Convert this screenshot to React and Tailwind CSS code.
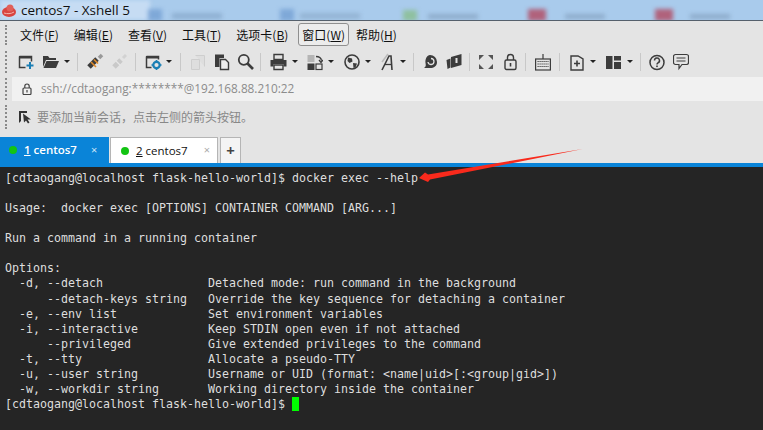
const dk = '#3c3c3c';

function Caret({ className = '' }) {
  return <span className={`block w-0 h-0 border-x-[3px] border-x-transparent border-t-[3px] border-t-[#222] ${className}`} />;
}

function Sep({ className = '' }) {
  return <span className={`block w-px h-[18px] bg-[#c8c8c8] ${className}`} />;
}

function Ico({ w = 16, className = '', children }) {
  return (
    <svg width={w} height="18" viewBox={`0 0 ${w} 18`} className={`shrink-0 ${className}`}>
      {children}
    </svg>
  );
}

function Grip({ className = '' }) {
  return <span className={`block w-[2px] border-l-2 border-dotted border-[#8a8a8a] ${className}`} />;
}

const terminalLines = [
  '[cdtaogang@localhost flask-hello-world]$ docker exec --help',
  '',
  'Usage:  docker exec [OPTIONS] CONTAINER COMMAND [ARG...]',
  '',
  'Run a command in a running container',
  '',
  'Options:',
  '  -d, --detach               Detached mode: run command in the background',
  '      --detach-keys string   Override the key sequence for detaching a container',
  '  -e, --env list             Set environment variables',
  '  -i, --interactive          Keep STDIN open even if not attached',
  '      --privileged           Give extended privileges to the command',
  '  -t, --tty                  Allocate a pseudo-TTY',
  '  -u, --user string          Username or UID (format: <name|uid>[:<group|gid>])',
  '  -w, --workdir string       Working directory inside the container',
];

const menus = [
  ['文件(', 'F', ')'],
  ['编辑(', 'E', ')'],
  ['查看(', 'V', ')'],
  ['工具(', 'T', ')'],
  ['选项卡(', 'B', ')'],
  ['窗口(', 'W', ')'],
  ['帮助(', 'H', ')'],
];

function Toolbar() {
  return (
    <div className="h-[27px] flex items-center pl-[5px]">
      <Grip className="h-[22px] mr-[11px]" />
      {/* new session */}
      <Ico w={16}>
        <path d="M1.5 3.5h12v5M1.5 3.5v11h6" fill="none" stroke={dk} strokeWidth="1.5" />
        <rect x="1" y="3" width="13" height="2.5" fill={dk} />
        <path d="M12 9v7M8.5 12.5h7" stroke="#1a7fb5" strokeWidth="2" />
      </Ico>
      {/* open */}
      <Ico w={17} className="ml-[8px]">
        <path d="M1 3h5l1.5 2H14v2H4L1 14z" fill={dk} />
        <path d="M4.5 8H17l-3 7H1.5z" fill={dk} />
      </Ico>
      <Caret className="ml-[5px]" />
      <Sep className="ml-[7px]" />
      {/* connect */}
      <Ico w={18} className="ml-[8px]">
        <path d="M11 6l-8 8" stroke={dk} strokeWidth="5" />
        <path d="M5 9l5 5M8 6.5l4 4" stroke="#e08a2a" strokeWidth="1.6" />
        <path d="M13 5l3-3" stroke="#999" strokeWidth="3.5" />
      </Ico>
      {/* disconnect */}
      <Ico w={16} className="ml-[7px]">
        <path d="M10 7l-7 7" stroke="#c9c9c9" strokeWidth="5" />
        <path d="M12 5l3-3" stroke="#d2d2d2" strokeWidth="3" />
        <path d="M5 8l5 5" stroke="#e6e6e6" strokeWidth="1.2" />
      </Ico>
      <Sep className="ml-[8px]" />
      {/* properties */}
      <Ico w={17} className="ml-[9px]">
        <path d="M1.5 3.5h12v3M1.5 3.5v11h5" fill="none" stroke={dk} strokeWidth="1.5" />
        <rect x="1" y="3" width="13" height="2.5" fill={dk} />
        <circle cx="11.5" cy="12" r="3.2" fill="none" stroke="#1a7fb5" strokeWidth="2.2" />
        <path d="M11.5 7v2M11.5 15v2M6.5 12h2M14.5 12h2" stroke="#1a7fb5" strokeWidth="1.6" />
      </Ico>
      <Caret className="ml-[4px]" />
      <Sep className="ml-[8px]" />
      {/* copy */}
      <Ico w={16} className="ml-[9px]">
        <path d="M5.5 2.5h9v11M1.5 6.5h8v10h-8z" fill="#dedede" stroke="#cecece" />
      </Ico>
      {/* paste */}
      <Ico w={16} className="ml-[8px]">
        <path d="M1 1.5h9V5H5.5v9H1z" fill={dk} />
        <path d="M6.5 6.5h5l3 3v7h-8z" fill="#eee" stroke={dk} strokeWidth="1.4" />
      </Ico>
      {/* find */}
      <Ico w={17} className="ml-[7px]">
        <circle cx="6.8" cy="6.8" r="5" fill="#e8e8e8" stroke={dk} strokeWidth="1.8" />
        <path d="M10.5 10.5l5.5 5.5" stroke={dk} strokeWidth="2.6" />
      </Ico>
      <Sep className="ml-[6px]" />
      {/* print */}
      <Ico w={17} className="ml-[9px]">
        <path d="M4 1.5h9v5H4zM4 12h9v4.5H4z" fill="none" stroke={dk} strokeWidth="1.4" />
        <path d="M0.5 7H16.5v6.5h-3V11h-10v2.5h-3z" fill={dk} />
      </Ico>
      <Caret className="ml-[5px]" />
      {/* transfer */}
      <Ico w={16} className="ml-[9px]">
        <rect x="0.5" y="2" width="7" height="7" fill="#b5b5b5" />
        <rect x="0.5" y="10.5" width="7" height="6.5" fill={dk} />
        <rect x="9" y="11" width="6" height="5.5" fill="none" stroke={dk} strokeWidth="1.2" />
        <path d="M9 3.5c3 0 5 1 5.500 4M12 7l2 2.500L16 7" fill="none" stroke={dk} strokeWidth="1.3" />
      </Ico>
      <Caret className="ml-[5px]" />
      {/* globe */}
      <Ico w={16} className="ml-[10px]">
        <circle cx="8" cy="9" r="7" fill="none" stroke={dk} strokeWidth="1.6" />
        <path d="M4 4.500l4 1 .5 3-3 1.500-2-2zM9 10l4 .5-1.500 4-2 .5z" fill={dk} />
      </Ico>
      <Caret className="ml-[5px]" />
      {/* font */}
      <Ico w={14} className="ml-[10px]">
        <path d="M1 17L8 3h2l1 14" fill="none" stroke={dk} strokeWidth="1.6" />
        <path d="M4 11.500h6" stroke={dk} strokeWidth="1.300" />
        <path d="M1 9L7 1" stroke="#bbb" strokeWidth="1.500" />
      </Ico>
      <Caret className="ml-[5px]" />
      <Sep className="ml-[7px]" />
      {/* shell */}
      <Ico w={16} className="ml-[8px]">
        <path d="M8 2a7 7 0 0 1 7 7c0 4-3 6-7 6H2c2-1 2-3 1.500-5C3 6 5 2 8 2z" fill={dk} />
        <path d="M9 5.500a3 3 0 1 1-3 3.500" fill="none" stroke="#e4e4e4" strokeWidth="1.300" />
      </Ico>
      {/* script */}
      <Ico w={16} className="ml-[8px]">
        <path d="M0.500 7l4-1.500v9l-3 1.500zM5 4l10.500-3v11L5 15z" fill={dk} />
        <rect x="9.500" y="5" width="2" height="5" fill="#e4e4e4" />
      </Ico>
      <Sep className="ml-[7px]" />
      {/* fullscreen */}
      <Ico w={14} className="ml-[9px]">
        <path d="M0 2h5L0 7zM14 2H9l5 5zM0 16h5l-5-5zM14 16H9l5-5z" fill="#555" />
      </Ico>
      {/* lock */}
      <Ico w={13} className="ml-[11px]">
        <rect x="1" y="7" width="11" height="9.500" rx="1.500" fill="none" stroke={dk} strokeWidth="1.400" />
        <path d="M3.500 7V4.500a3 3 0 0 1 6 0V7" fill="none" stroke={dk} strokeWidth="1.400" />
        <rect x="5.700" y="10" width="1.600" height="3.500" fill={dk} />
      </Ico>
      <Sep className="ml-[8px]" />
      {/* keyboard */}
      <Ico w={16} className="ml-[9px]">
        <path d="M8 1v5" stroke={dk} strokeWidth="1.200" />
        <rect x="0.600" y="6" width="14.800" height="11" fill="none" stroke={dk} strokeWidth="1.200" />
        <path d="M2.500 8.500h11M2.500 11h11M2.500 13.500h11" stroke={dk} strokeWidth="1.200" strokeDasharray="1.200 .8" />
      </Ico>
      <Sep className="ml-[8px]" />
      {/* new tab group */}
      <Ico w={14} className="ml-[10px]">
        <path d="M1 3h7l5 3v11H1z" fill="none" stroke={dk} strokeWidth="1.400" />
        <path d="M7 7.500v6M4 10.500h6" stroke={dk} strokeWidth="1.600" />
      </Ico>
      <Caret className="ml-[6px]" />
      {/* layout */}
      <Ico w={15} className="ml-[10px]">
        <rect x="0" y="3" width="6.500" height="13" fill={dk} />
        <rect x="8" y="3" width="7" height="4.500" fill={dk} />
        <rect x="8" y="9" width="7" height="7" fill={dk} />
      </Ico>
      <Caret className="ml-[6px]" />
      <Sep className="ml-[7px]" />
      {/* help */}
      <Ico w={16} className="ml-[8px]">
        <circle cx="8" cy="9.500" r="7" fill="none" stroke={dk} strokeWidth="1.500" />
        <path d="M5.500 7.500a2.500 2.500 0 1 1 3.500 2.300c-.8.4-1 .8-1 1.700" fill="none" stroke={dk} strokeWidth="1.500" />
        <rect x="7.200" y="12.500" width="1.600" height="1.600" fill={dk} />
      </Ico>
      {/* chat */}
      <Ico w={16} className="ml-[8px]">
        <path d="M2.500 1.500h11a2 2 0 0 1 2 2v6a2 2 0 0 1-2 2H9l-3 4v-4H2.500a2 2 0 0 1-2-2v-6a2 2 0 0 1 2-2z" fill="none" stroke={dk} strokeWidth="1.200" />
        <path d="M3.500 5h9M3.500 8h9" stroke={dk} strokeWidth="1.200" />
      </Ico>
    </div>
  );
}

export default function App() {
  return (
    <div className="relative w-[763px] h-[430px] overflow-hidden bg-[#e4e4e4] font-['Liberation_Sans',sans-serif]">
      {/* Title bar */}
      <div className="relative h-[21px] bg-[#a9cbec] border-b border-[#55606c] overflow-hidden flex items-center">
        {/* blurred windows behind the glass */}
        <div className="absolute inset-0 blur-[2px]">
          <div className="absolute left-0 top-0 h-full w-[150px] bg-[#c6dcf3]" />
          <div className="absolute left-[148px] top-[9px] w-[14px] h-[12px] bg-[#7fa8d8]" />
          <div className="absolute left-[172px] top-[13px] w-[50px] h-[6px] bg-[#8fb0d2]" />
          <div className="absolute left-[280px] top-[9px] w-[14px] h-[12px] bg-[#7fa8d8]" />
          <div className="absolute left-[300px] top-[13px] w-[60px] h-[6px] bg-[#94b4d4]" />
          <div className="absolute left-[403px] top-[10px] w-[14px] h-[11px] bg-[#8fc0a0]" />
          <div className="absolute left-[428px] top-[14px] w-[50px] h-[5px] bg-[#8eaccb]" />
          <div className="absolute left-[528px] top-[9px] w-[18px] h-[12px] bg-[#b0627c]" />
          <div className="absolute left-[565px] top-[14px] w-[40px] h-[5px] bg-[#8eaccb]" />
          <div className="absolute left-[655px] top-[9px] w-[18px] h-[12px] bg-[#b0627c]" />
          <div className="absolute left-[690px] top-[14px] w-[40px] h-[5px] bg-[#8eaccb]" />
        </div>
        <svg width="16" height="15" viewBox="0 0 16 15" className="relative ml-[1px] mr-[4px]">
          <ellipse cx="8" cy="9" rx="7" ry="5" fill="#d9443f" />
          <circle cx="9" cy="5" r="3.500" fill="#e0605a" />
          <path d="M3 10c3 1 7 1 10-1" stroke="#f3b4ae" fill="none" />
        </svg>
        <span className="relative text-[13.5px] text-[#111] font-['Open_Sans',sans-serif]">centos7 - Xshell 5</span>
      </div>

      {/* Menu bar */}
      <div className="h-[27px] flex items-center pl-[5px]">
        <Grip className="h-[20px] mr-[9px]" />
        <div className="flex items-center text-[12px] text-[#111] font-['Noto_Sans_CJK_SC',sans-serif]">
          {menus.map(([a, b, c]) => (
            <span
              key={b}
              className={`px-[3px] h-[23px] leading-[21px] mr-[7px] rounded-[3px] whitespace-nowrap ${b === 'W' ? 'border border-[#8f8f8f] bg-[#ececec] !mr-[3px] -ml-[1px]' : 'border border-transparent'}`}
            >
              {a}<span className="underline">{b}</span>{c}
            </span>
          ))}
        </div>
      </div>

      <Toolbar />

      {/* Address bar */}
      <div className="h-[25px] mt-[1px] flex items-center pl-[5px]">
        <Grip className="h-[22px] mr-[5px]" />
        <div className="flex-1 h-[24px] bg-[#f1f1f1] flex items-center pl-[10px]">
          <svg width="10" height="12" viewBox="0 0 10 12" className="mr-[9px]">
            <rect x="1" y="5" width="8" height="6.500" rx="1" fill="none" stroke="#444" strokeWidth="1.200" />
            <path d="M2.800 5V3.200a2.200 2.200 0 0 1 4.400 0V5" fill="none" stroke="#444" strokeWidth="1.200" />
            <rect x="4.400" y="7" width="1.200" height="2.500" fill="#444" />
          </svg>
          <span className="text-[11.8px] text-[#8c8c8c] font-['Open_Sans',sans-serif]">ssh://cdtaogang:********@192.168.88.210:22</span>
        </div>
      </div>

      {/* Quick bar */}
      <div className="h-[31px] flex items-center pl-[5px]">
        <Grip className="h-[24px] mr-[11px]" />
        <svg width="14" height="14" viewBox="0 0 14 14" className="mr-[5px]">
          <path d="M1 1h8v2H3v8l-2 2z" fill="#333" />
          <path d="M5 3.500l1 9 2-2 2 3 1.500-1-2-3H13z" fill="#333" />
        </svg>
        <span className="text-[12px] text-[#888] font-['Noto_Sans_CJK_SC',sans-serif]">要添加当前会话，点击左侧的箭头按钮。</span>
      </div>

      {/* Tabs */}
      <div className="h-[26px] mt-[5px] flex items-stretch gap-[1px] font-['Open_Sans',sans-serif] text-[11.5px]">
        <div className="w-[109px] bg-[#0a84d8] text-white flex items-center pl-[9px]">
          <span className="w-[8px] h-[8px] rounded-full bg-[#13c413] mr-[7px]" />
          <span className="font-semibold"><span className="underline">1</span> centos7</span>
          <span className="ml-[14px] text-[11px] text-[#cfe6f7]">×</span>
        </div>
        <div className="w-[108px] bg-white border border-[#b5b5b5] border-b-0 text-[#111] flex items-center pl-[10px]">
          <span className="w-[8px] h-[8px] rounded-full bg-[#13c413] mr-[7px]" />
          <span><span className="underline">2</span> centos7</span>
          <span className="ml-[16px] text-[11px] text-[#aaa]">×</span>
        </div>
        <div className="w-[21px] ml-[1px] bg-[#f4f4f4] border border-[#b5b5b5] border-b-0 flex items-center justify-center text-[15px] font-bold leading-none text-[#444]">+</div>
      </div>

      {/* Terminal */}
      <div className="h-[4px] bg-[#0a84d8]" />
      <div className="h-[263px] bg-[#252525] pl-[5px] pt-[4px] font-['DejaVu_Sans_Mono',monospace] text-[11.64px] leading-[15.07px] text-[#dedede] whitespace-pre">
        {terminalLines.map((line, i) => (
          <div key={i} className="h-[15.07px]">{line}</div>
        ))}
        <div className="h-[15.07px] flex items-center">
          <span>{'[cdtaogang@localhost flask-hello-world]$ '}</span>
          <span className="w-[7px] h-[14px] bg-[#00ff00]" />
        </div>
      </div>

      {/* red annotation arrow */}
      <svg width="763" height="430" className="absolute left-0 top-0 pointer-events-none">
        <polygon points="582.700,149 428,174.500 425,172.500 419,178 428,182 430,179.500" fill="#f92a1c" />
      </svg>
    </div>
  );
}
